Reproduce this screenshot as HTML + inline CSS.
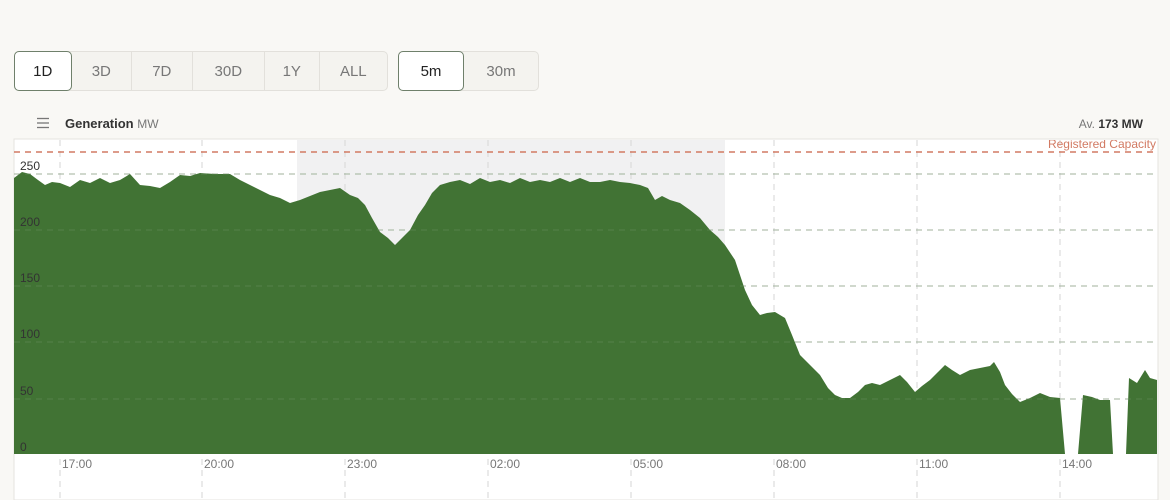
<!DOCTYPE html>
<html><head><meta charset="utf-8"><style>
body{margin:0;width:1170px;height:500px;background:#f9f8f5;font-family:"Liberation Sans",sans-serif;overflow:hidden;position:relative}
.grp{position:absolute;top:51px;height:38px;display:flex;border:1px solid #e2e0db;border-radius:5px;background:#f4f3ef}
.grp div{display:flex;align-items:center;justify-content:center;font-size:15px;color:#777;border-right:1px solid #e2e0db;height:38px}
.grp div:last-child{border-right:none}
.grp .on{background:#fff;border:1px solid #6f806b;border-radius:5px;color:#222;height:38px;margin:-1px 0 0 -1px}
</style></head><body>
<div class="grp" style="left:14px;width:372px">
<div class="on" style="width:56px">1D</div><div style="width:60px">3D</div><div style="width:60px">7D</div><div style="width:72px">30D</div><div style="width:54px">1Y</div><div style="width:68px">ALL</div></div>
<div class="grp" style="left:398px;width:139px">
<div class="on" style="width:64px">5m</div><div style="width:74px">30m</div></div>
<svg style="position:absolute;left:36px;top:117px" width="14" height="12"><g stroke="#777" stroke-width="1.3"><line x1="1" y1="1.5" x2="13" y2="1.5"/><line x1="1" y1="6" x2="13" y2="6"/><line x1="1" y1="10.5" x2="13" y2="10.5"/></g></svg>
<div style="position:absolute;left:65px;top:116px;font-size:13px;font-weight:bold;color:#333">Generation <span style="font-weight:normal;color:#777;font-size:12px">MW</span></div>
<div style="position:absolute;right:27px;top:117px;font-size:12px;color:#777">Av. <b style="color:#333">173 MW</b></div>
<svg style="position:absolute;left:0;top:0" width="1170" height="500">
<defs><clipPath id="c"><rect x="14" y="140" width="1144" height="360"/></clipPath></defs>
<rect x="14" y="139" width="1144" height="361" fill="#fff" stroke="#e5e3df"/>
<rect x="297" y="140" width="428" height="314" fill="#f1f1f2"/>
<g stroke="#d6d6d6" stroke-dasharray="6,5">
<line x1="60" y1="140" x2="60" y2="500"/><line x1="202" y1="140" x2="202" y2="500"/><line x1="345" y1="140" x2="345" y2="500"/><line x1="488" y1="140" x2="488" y2="500"/><line x1="631" y1="140" x2="631" y2="500"/><line x1="774" y1="140" x2="774" y2="500"/><line x1="917" y1="140" x2="917" y2="500"/><line x1="1060" y1="140" x2="1060" y2="500"/>
<line x1="14" y1="174" x2="1157" y2="174"/><line x1="14" y1="230" x2="1157" y2="230"/><line x1="14" y1="286" x2="1157" y2="286"/><line x1="14" y1="342" x2="1157" y2="342"/><line x1="14" y1="399" x2="1157" y2="399"/>
</g>
<path fill="#417334" d="M14,454 L14,178 L22,172 L30,174 L38,180 L45,185 L52,182 L60,183 L70,187 L80,180 L90,183 L100,178 L110,183 L120,180 L130,174 L140,185 L150,186 L160,188 L170,182 L180,175 L190,176 L200,173 L215,174 L230,174 L240,180 L250,185 L260,190 L270,195 L280,198 L290,203 L300,200 L310,196 L320,192 L330,190 L340,188 L350,195 L358,198 L365,205 L372,218 L380,232 L388,238 L395,245 L402,238 L410,230 L418,215 L425,205 L432,193 L440,185 L450,182 L460,180 L470,184 L480,178 L490,182 L500,180 L510,183 L520,178 L530,182 L540,180 L550,182 L560,178 L570,182 L580,178 L590,182 L600,182 L610,180 L620,182 L630,183 L640,185 L648,188 L655,200 L662,196 L670,200 L680,203 L690,210 L700,218 L710,230 L718,237 L725,245 L735,260 L740,275 L745,290 L752,305 L760,315 L767,313 L775,312 L785,318 L792,335 L800,355 L810,365 L820,375 L828,388 L835,395 L842,398 L850,398 L858,392 L865,385 L872,383 L880,385 L890,380 L900,375 L907,382 L915,392 L922,386 L930,380 L938,372 L945,365 L952,370 L960,375 L970,370 L980,368 L990,366 L994,362 L1000,372 L1005,385 L1012,394 L1020,402 L1030,398 L1040,393 L1050,397 L1060,398 L1065,454 L1078,454 L1083,395 L1092,397 L1100,400 L1110,400 L1113,454 L1126,454 L1129,378 L1137,383 L1145,370 L1150,378 L1157,380 L1157,454 Z"/>
<g stroke="#6a8d5f" stroke-dasharray="6,5" stroke-opacity="0.5">
<line x1="14" y1="174" x2="1157" y2="174"/><line x1="14" y1="230" x2="1157" y2="230"/><line x1="14" y1="286" x2="1157" y2="286"/><line x1="14" y1="342" x2="1157" y2="342"/><line x1="14" y1="399" x2="1157" y2="399"/>
</g>
<line x1="14" y1="152" x2="1157" y2="152" stroke="#d27a63" stroke-width="1.5" stroke-dasharray="6,5"/>
<text clip-path="url(#c)" x="1156" y="148" text-anchor="end" font-size="12" fill="#d27a63" font-family="Liberation Sans">Registered Capacity</text>
<g font-size="12" fill="#333" font-family="Liberation Sans">
<text x="20" y="170">250</text><text x="20" y="226">200</text><text x="20" y="282">150</text><text x="20" y="338">100</text><text x="20" y="395">50</text><text x="20" y="451">0</text></g>
<g font-size="12" fill="#777" font-family="Liberation Sans">
<text x="62" y="468">17:00</text><text x="204" y="468">20:00</text><text x="347" y="468">23:00</text><text x="490" y="468">02:00</text><text x="633" y="468">05:00</text><text x="776" y="468">08:00</text><text x="919" y="468">11:00</text><text x="1062" y="468">14:00</text></g>
</svg>
</body></html>
